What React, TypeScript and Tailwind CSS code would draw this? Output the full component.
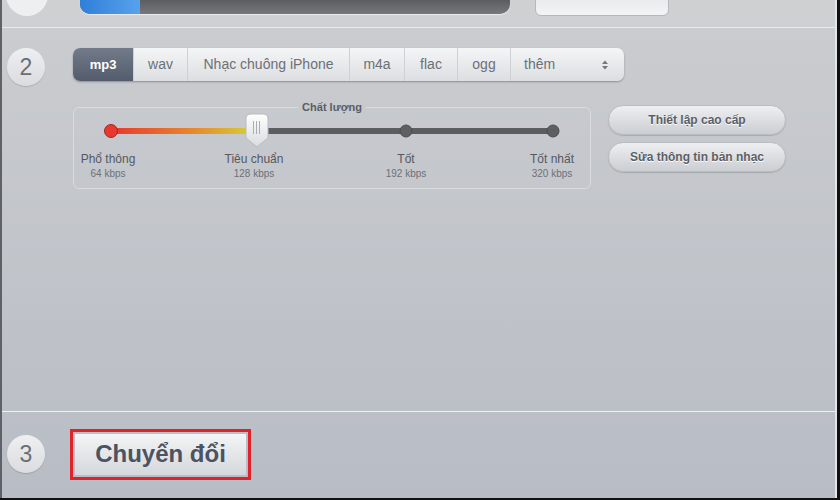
const font = "font-['Liberation_Sans',Arial,sans-serif]";

function StepCircle({ n }: { n: string }) {
  return (
    <div className="flex h-[38px] w-[38px] shrink-0 items-center justify-center rounded-full bg-gradient-to-b from-[#eeeff1] to-[#dadcdf] text-[23px] leading-none text-[#6b6f75] shadow-[0_1px_1px_rgba(0,0,0,0.15)]">
      {n}
    </div>
  );
}

const tabs = ["wav", "Nhạc chuông iPhone", "m4a", "flac", "ogg"];
const tabWidths = ["w-[54px]", "w-[162px]", "w-[55px]", "w-[53px]", "w-[53px]"];

function FormatTabs() {
  return (
    <div className="flex h-[33px] w-[551px] overflow-hidden rounded-[7px] bg-gradient-to-b from-[#f4f5f6] to-[#dcdee1] shadow-[0_1px_2px_rgba(0,0,0,0.3)]">
      <div className="flex w-[60px] items-center justify-center bg-gradient-to-b from-[#737b8a] to-[#535c6c] text-[13px] font-bold text-white">
        mp3
      </div>
      {tabs.map((t, i) => (
        <div
          key={t}
          className={`flex ${tabWidths[i]} items-center justify-center border-l border-[#cdd0d4] text-[14px] text-[#6c7077]`}
        >
          {t}
        </div>
      ))}
      <div className="flex flex-1 items-center justify-between border-l border-[#cdd0d4] pl-[13px] pr-[15px] text-[14px] text-[#6c7077]">
        <span>thêm</span>
        <svg width="8" height="12" viewBox="0 0 8 12">
          <path d="M1 5 L4 1.5 L7 5 Z" fill="#73777e" />
          <path d="M1 7 L4 10.5 L7 7 Z" fill="#73777e" />
        </svg>
      </div>
    </div>
  );
}

function QualitySlider() {
  return (
    <svg width="516" height="44" viewBox="0 0 516 44" className="block">
      <defs>
        <linearGradient id="fill" x1="0" x2="1" y1="0" y2="0">
          <stop offset="0" stopColor="#e8372d" />
          <stop offset="0.55" stopColor="#e7862f" />
          <stop offset="1" stopColor="#d3d43a" />
        </linearGradient>
        <linearGradient id="thumb" x1="0" x2="0" y1="0" y2="1">
          <stop offset="0" stopColor="#ffffff" />
          <stop offset="1" stopColor="#d9dbde" />
        </linearGradient>
      </defs>
      <rect x="37" y="22" width="442" height="6" rx="3" fill="#5b5d5f" />
      <rect x="37" y="22" width="146" height="6" fill="url(#fill)" />
      <circle cx="37" cy="25" r="6.5" fill="#e8382f" stroke="#9e2b26" strokeWidth="1" />
      <circle cx="332" cy="25" r="6" fill="#5d6062" stroke="#4a4c4e" strokeWidth="1" />
      <circle cx="479" cy="25" r="6" fill="#5d6062" stroke="#4a4c4e" strokeWidth="1" />
      <path
        d="M172 13 Q172 8 177 8 L189 8 Q194 8 194 13 L194 32 L183 41 L172 32 Z"
        fill="url(#thumb)"
        stroke="#b8bbbf"
        strokeWidth="1"
      />
      <path d="M179.5 15 V28 M182.5 15 V28 M185.5 15 V28" stroke="#a9acb1" strokeWidth="1" />
    </svg>
  );
}

const levels = [
  { name: "Phổ thông", rate: "64 kbps", ml: "ml-0" },
  { name: "Tiêu chuẩn", rate: "128 kbps", ml: "ml-[78px]" },
  { name: "Tốt", rate: "192 kbps", ml: "ml-[84px]" },
  { name: "Tốt nhất", rate: "320 kbps", ml: "ml-[78px]" },
];

function PillButton({ label }: { label: string }) {
  return (
    <div className="flex h-[30px] w-[178px] items-center justify-center rounded-full border border-[#b9bcc1] bg-gradient-to-b from-[#eeeff1] to-[#cbced2] text-[12px] font-bold text-[#5b5f66] shadow-[0_1px_1px_rgba(0,0,0,0.15)] [text-shadow:0_1px_0_#fff]">
      {label}
    </div>
  );
}

export default function App() {
  return (
    <div className={`h-[500px] w-[840px] bg-[#111] ${font}`}>
      <div className="flex h-[498px] w-[837px] flex-col border-l-2 border-r-2 border-l-[#5e6166] border-r-[#e3e5e8] bg-gradient-to-b from-[#cbcdd0] to-[#b8bcc4]">
        {/* step 1, scrolled mostly out of view */}
        <div className="flex h-[28px] shrink-0 items-end overflow-hidden border-b border-[#e9eaec] bg-[#cfd0d2] pb-[13px] pl-[4px]">
          <div className="mb-[-2px] flex h-[42px] w-[42px] shrink-0 items-end justify-center rounded-full bg-[#eeeff0] pb-[20px] text-[22px] leading-none text-[#6b6f75]">
            1
          </div>
          <div className="ml-[32px] flex h-[30px] w-[430px] shrink-0 overflow-hidden rounded-b-[10px] bg-gradient-to-b from-[#3f4042] to-[#77787b] shadow-[0_1px_1px_rgba(255,255,255,0.6)]">
            <div className="h-full w-[60px] bg-gradient-to-r from-[#2d7fd8] to-[#58a2ec]" />
          </div>
          <div className="mb-[-2px] ml-[25px] flex h-[30px] w-[134px] shrink-0 items-end justify-center rounded-b-[6px] border border-[#b5b8bc] bg-gradient-to-b from-[#e2e3e5] to-[#f3f4f5] pb-[16px] text-[16px] font-bold text-[#555a61]">
            Hủy bỏ
          </div>
        </div>

        {/* step 2 */}
        <div className="flex flex-1 border-b border-[#eef0f2] pl-[5px] pt-[20px]">
          <StepCircle n="2" />
          <div className="ml-[28px] flex flex-col">
            <FormatTabs />
            <div className="mt-[20px] flex items-start">
              <fieldset className="m-0 h-[88px] w-[516px] rounded-[6px] border border-[#d9dbdf] p-0">
                <legend className="mx-auto px-[4px] text-[11px] font-bold leading-[13px] text-[#5b5e63]">
                  Chất lượng
                </legend>
                <div className="-mt-[8px]">
                  <QualitySlider />
                </div>
                <div className="mt-[2px] flex">
                  {levels.map((l) => (
                    <div key={l.name} className={`flex w-[68px] flex-col items-center ${l.ml}`}>
                      <span className="text-[12px] leading-[15px] text-[#55595f]">{l.name}</span>
                      <span className="text-[10px] leading-[13px] text-[#6d7177]">{l.rate}</span>
                    </div>
                  ))}
                </div>
              </fieldset>
              <div className="ml-[17px] mt-[4px] flex flex-col gap-[7px]">
                <PillButton label="Thiết lập cao cấp" />
                <PillButton label="Sửa thông tin bản nhạc" />
              </div>
            </div>
          </div>
        </div>

        {/* step 3 */}
        <div className="flex h-[86px] shrink-0 items-center pl-[5px] pb-[2px]">
          <StepCircle n="3" />
          <div className="ml-[25px] border-[3px] border-[#e0222b] p-[2px]">
            <div className="flex h-[41px] w-[171px] items-center justify-center bg-gradient-to-b from-[#f3f4f5] to-[#d5d8dc] text-[24px] font-bold text-[#4b5261]">
              Chuyển đổi
            </div>
          </div>
        </div>
      </div>
    </div>
  );
}
